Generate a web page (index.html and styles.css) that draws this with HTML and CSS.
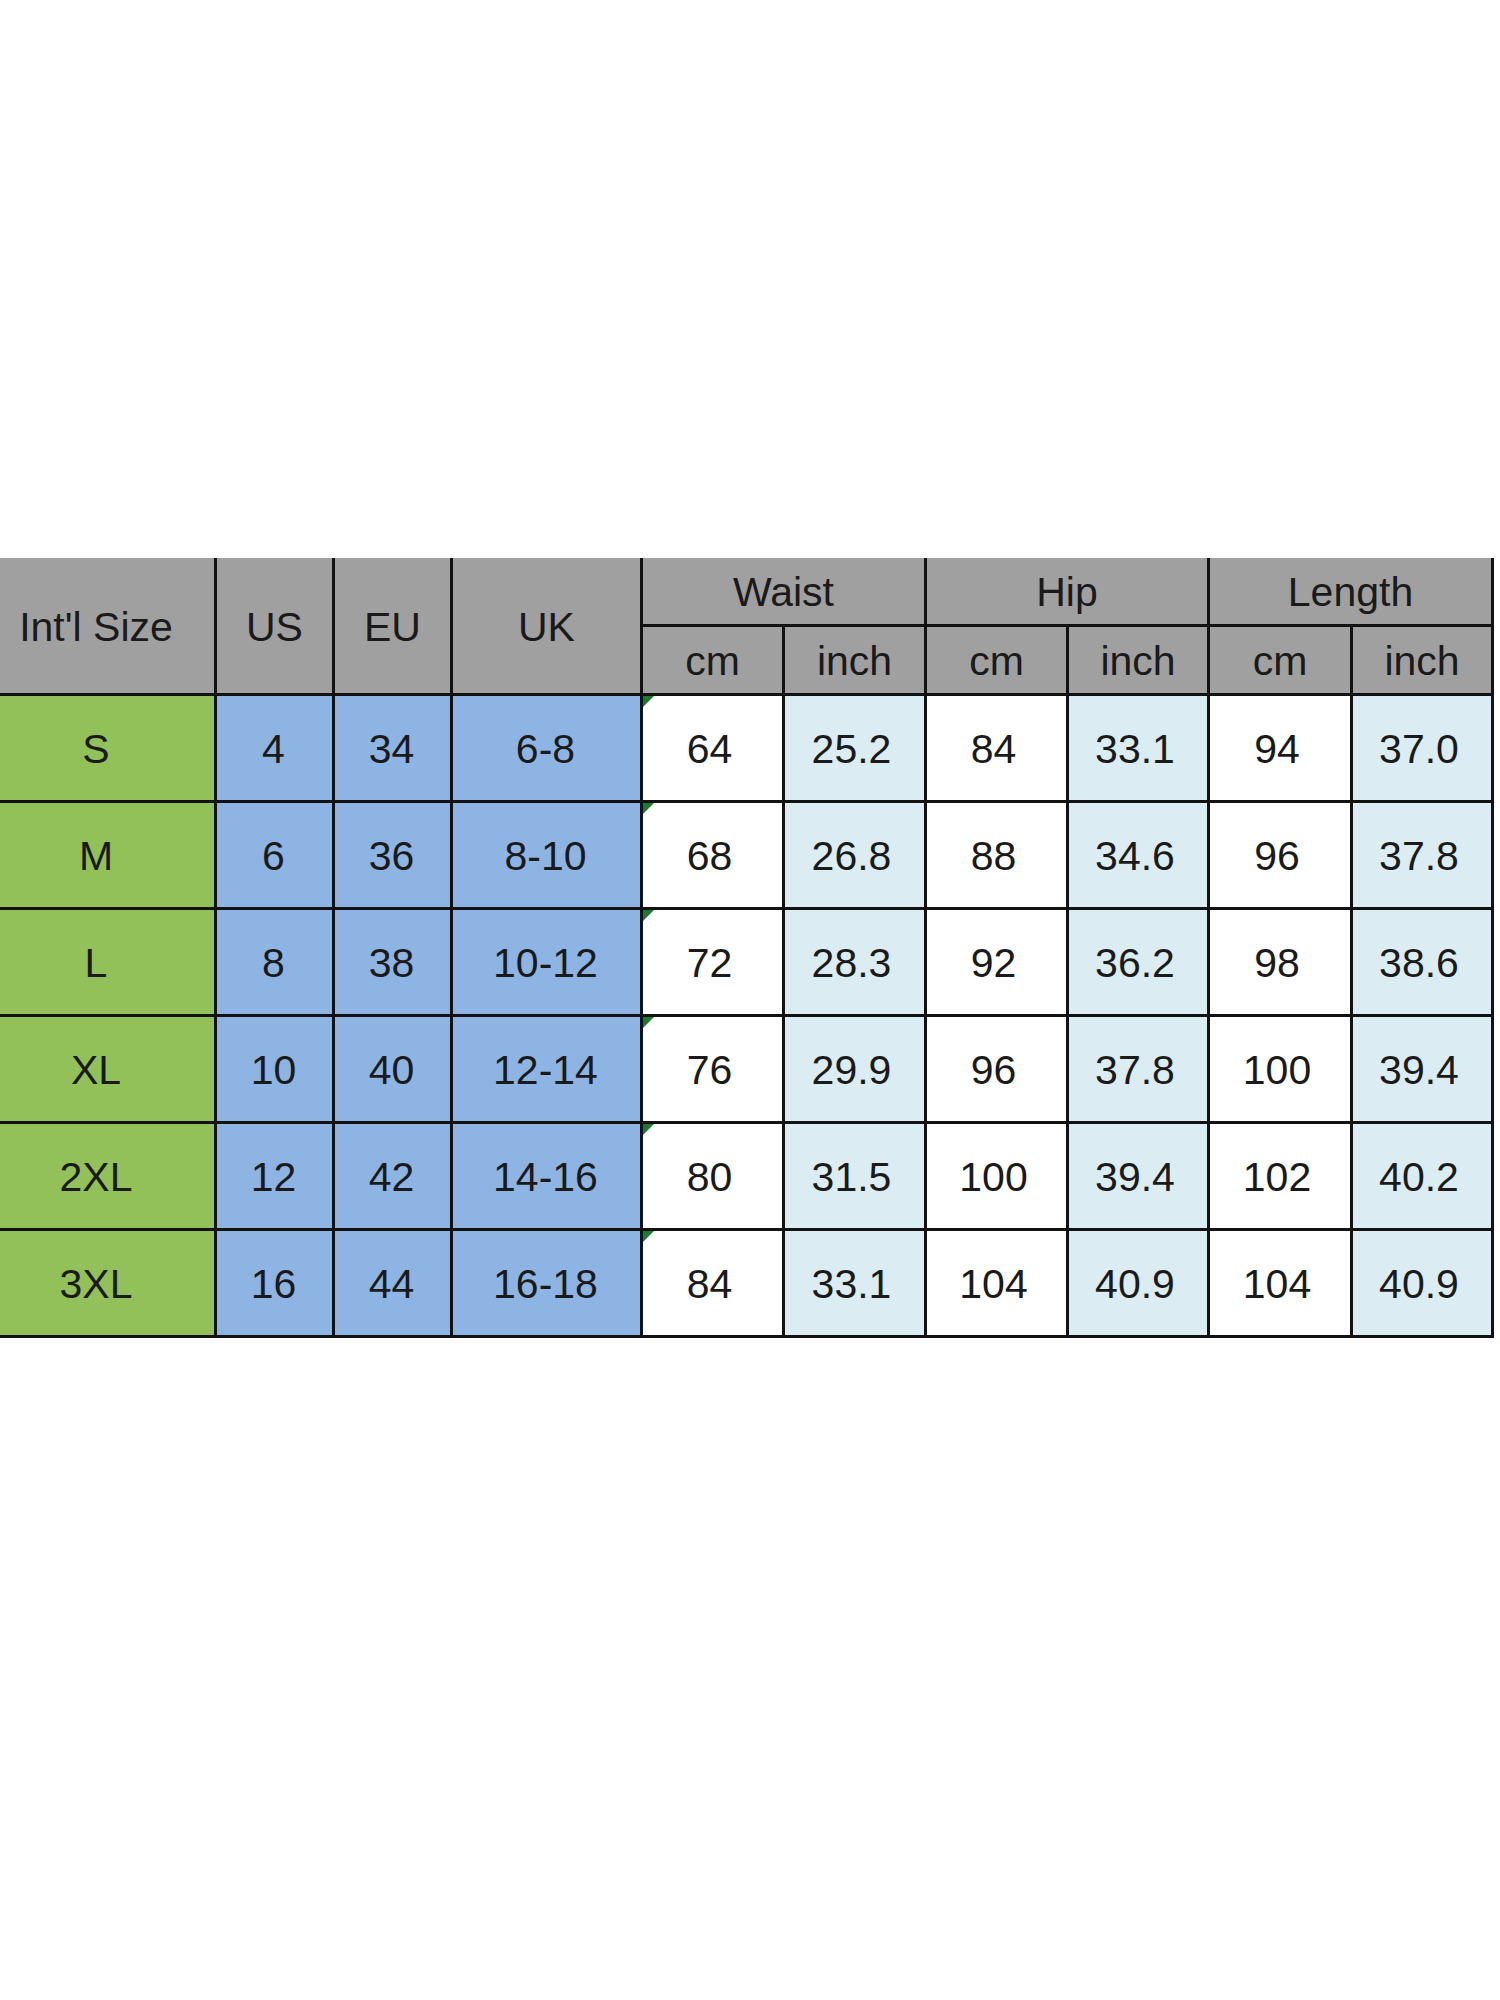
FILE: index.html
```html
<!DOCTYPE html>
<html lang="en">
<head>
<meta charset="utf-8">
<title>Size Chart</title>
<link rel="stylesheet" href="styles.css">
</head>
<body>
<div class="page">
  <div class="chart">
    <div class="c hd span2r first">Int'l Size</div>
    <div class="c hd span2r">US</div>
    <div class="c hd span2r">EU</div>
    <div class="c hd span2r">UK</div>
    <div class="c hd span2c">Waist</div>
    <div class="c hd span2c">Hip</div>
    <div class="c hd span2c">Length</div>
    <div class="c hd">cm</div>
    <div class="c hd">inch</div>
    <div class="c hd">cm</div>
    <div class="c hd">inch</div>
    <div class="c hd">cm</div>
    <div class="c hd">inch</div>

    <div class="c size first">S</div><div class="c reg">4</div><div class="c reg">34</div><div class="c reg">6-8</div>
    <div class="c cm mark">64</div><div class="c in">25.2</div><div class="c cm">84</div><div class="c in">33.1</div><div class="c cm">94</div><div class="c in">37.0</div>

    <div class="c size first">M</div><div class="c reg">6</div><div class="c reg">36</div><div class="c reg">8-10</div>
    <div class="c cm mark">68</div><div class="c in">26.8</div><div class="c cm">88</div><div class="c in">34.6</div><div class="c cm">96</div><div class="c in">37.8</div>

    <div class="c size first">L</div><div class="c reg">8</div><div class="c reg">38</div><div class="c reg">10-12</div>
    <div class="c cm mark">72</div><div class="c in">28.3</div><div class="c cm">92</div><div class="c in">36.2</div><div class="c cm">98</div><div class="c in">38.6</div>

    <div class="c size first">XL</div><div class="c reg">10</div><div class="c reg">40</div><div class="c reg">12-14</div>
    <div class="c cm mark">76</div><div class="c in">29.9</div><div class="c cm">96</div><div class="c in">37.8</div><div class="c cm">100</div><div class="c in">39.4</div>

    <div class="c size first">2XL</div><div class="c reg">12</div><div class="c reg">42</div><div class="c reg">14-16</div>
    <div class="c cm mark">80</div><div class="c in">31.5</div><div class="c cm">100</div><div class="c in">39.4</div><div class="c cm">102</div><div class="c in">40.2</div>

    <div class="c size first">3XL</div><div class="c reg">16</div><div class="c reg">44</div><div class="c reg">16-18</div>
    <div class="c cm mark">84</div><div class="c in">33.1</div><div class="c cm">104</div><div class="c in">40.9</div><div class="c cm">104</div><div class="c in">40.9</div>
  </div>
</div>
</body>
</html>
```

FILE: styles.css
```css
html, body {
  margin: 0;
  padding: 0;
  background: #ffffff;
}

.page {
  width: 1500px;
  height: 2000px;
  padding-top: 558px;
  box-sizing: border-box;
}

.chart {
  display: grid;
  width: 1494px;
  box-sizing: border-box;
  grid-template-columns: 214px 115px 115px 187px 139px 139px 139px 138px 140px 138px;
  grid-template-rows: 66px 66px 104px 104px 104px 104px 104px 104px;
  gap: 3px;
  padding: 0 3px 3px 0;
  background: #121212;
  font-family: "Liberation Sans", Arial, sans-serif;
  font-size: 41px;
  color: #1a1a1a;
}

.c {
  display: flex;
  align-items: center;
  justify-content: center;
  position: relative;
  padding-right: 6px;
  padding-top: 3px;
}

.hd {
  background: #a0a0a0;
  padding-right: 0;
}

.span2r {
  grid-row: span 2;
}

.span2c {
  grid-column: span 2;
}

.first {
  padding-right: 22px;
}

.size {
  background: #92c15a;
}

.reg {
  background: #8db4e3;
  padding-right: 2px;
}

.cm {
  background: #ffffff;
}

.in {
  background: #dbecf3;
}

.mark::before {
  content: "";
  position: absolute;
  top: 0;
  left: 0;
  width: 0;
  height: 0;
  border-top: 11px solid #1d7a30;
  border-right: 11px solid transparent;
}
```
